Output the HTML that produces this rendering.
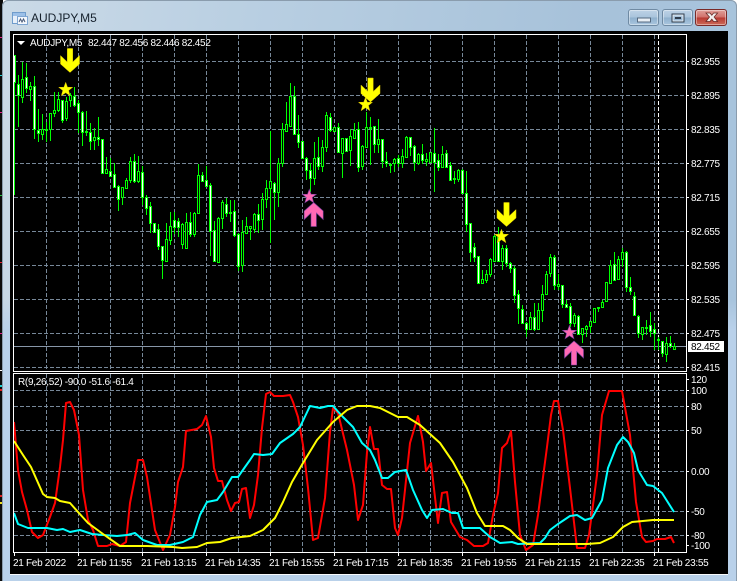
<!DOCTYPE html>
<html>
<head>
<meta charset="utf-8">
<title>AUDJPY,M5</title>
<style>
html,body{margin:0;padding:0;background:#fff;overflow:hidden}
body{width:739px;height:581px;position:relative;font-family:"Liberation Sans",sans-serif}
#strip{position:absolute;left:0;top:0;width:3px;height:581px;background:#0c0c0c}
#frame{position:absolute;left:2px;top:0;width:735px;height:581px;border-radius:6px 6px 0 0;background:linear-gradient(100deg,#cbdae7 0%,#b9cfe2 30%,#a7c2da 70%,#a9c5de 100%);box-shadow:inset 0 0 0 1px #8a9cad}
#lower{position:absolute;left:3px;top:300px;width:733px;height:281px;background:linear-gradient(180deg,rgba(185,209,234,0) 0,#b9d1ea 30px)}
#ttl{position:absolute;left:31px;top:11px;font-size:12px;line-height:15px;color:#15202c}
.btn{position:absolute;top:9px;height:17px;border:1px solid #6f8aa3;border-radius:3px;box-sizing:border-box;background:linear-gradient(180deg,#bdd2e6 0,#a9c4dc 48%,#8fb0cd 52%,#a9c6df 100%);box-shadow:inset 0 0 0 1px rgba(255,255,255,.4)}
#svg{position:absolute;left:0;top:0}
text{font-family:"Liberation Sans",sans-serif;font-size:10px;fill:#fff;letter-spacing:-.3px}
</style>
</head>
<body>
<div id="strip"></div>
<div id="frame"></div>
<div id="lower"></div>
<div id="ttl">AUDJPY,M5</div>
<div class="btn" style="left:628px;width:31px"></div>
<div class="btn" style="left:662px;width:31px"></div>
<div class="btn" style="left:695px;width:32px;border-color:#7a2a28;background:linear-gradient(180deg,#e0a09a 0,#d0706a 48%,#b83a32 52%,#cc6a58 100%)"></div>
<svg id="svg" width="739" height="581" viewBox="0 0 739 581" xmlns="http://www.w3.org/2000/svg">
<!-- left strip ticks -->
<g shape-rendering="crispEdges">
<rect x="0" y="37" width="2" height="1" fill="#e0208a"/><rect x="0" y="75" width="2" height="1" fill="#20d0d0"/><rect x="0" y="112" width="2" height="1" fill="#e0208a"/><rect x="0" y="195" width="2" height="1" fill="#20c040"/><rect x="0" y="262" width="2" height="1" fill="#e02030"/><rect x="0" y="333" width="2" height="1" fill="#e0208a"/><rect x="0" y="370" width="2" height="1" fill="#fff"/><rect x="0" y="385" width="2" height="2" fill="#20d0d0"/><rect x="0" y="389" width="2" height="2" fill="#e02020"/><rect x="0" y="495" width="2" height="2" fill="#e02020"/><rect x="0" y="502" width="2" height="2" fill="#f0e020"/>
</g>
<!-- title icon -->
<g shape-rendering="crispEdges">
<rect x="12.500" y="12.500" width="13" height="11" fill="#e8f0fa" stroke="#6f9ccc"/>
<rect x="13" y="13" width="12" height="3" fill="#9cc0e8"/>
<rect x="17.500" y="16.500" width="10" height="8" fill="#f4f8fd" stroke="#7fa6d2"/>
</g>
<path d="M19 22l1.500-3 1.500 3 1.500-3 1.500 3" fill="none" stroke="#4a5a78" stroke-width="1"/>
<!-- button glyphs -->
<rect x="637.500" y="18" width="13" height="4" fill="#e8eef4" stroke="#566a80"/>
<rect x="672" y="14" width="12" height="8" fill="none" stroke="#2e3c4c" stroke-width="1"/>
<rect x="673" y="15" width="10" height="6" fill="none" stroke="#e4ecf4" stroke-width="1"/>
<rect x="675" y="17" width="6" height="2" fill="#2e3c4c"/>
<path d="M706 13h4l1.800 2.200 1.800-2.200h4l-3.500 4 3.500 4.500h-4l-1.800-2.300-1.800 2.300h-4l3.500-4.500z" fill="#f2efee" stroke="#6b2a26" stroke-width=".8"/>
<!-- chart bg -->
<rect x="10" y="31" width="718" height="543" fill="#000"/>
<path d="M10 574.500H728" stroke="#fff" stroke-width="1" opacity=".9"/>
<!-- grid -->
<g stroke="#778899" stroke-width="1" stroke-dasharray="4 2" shape-rendering="crispEdges" fill="none">
<path d="M14 61.500H686M14 95.500H686M14 129.500H686M14 163.500H686M14 197.500H686M14 231.500H686M14 265.500H686M14 299.500H686M14 333.500H686M14 367.500H686"/>
<path d="M14 390.500H686M14 406.500H686M14 430.500H686M14 471.500H686M14 511.500H686M14 535.500H686"/>
<path d="M46.500 35V371M78.500 35V371M110.500 35V371M142.500 35V371M174.500 35V371M206.500 35V371M238.500 35V371M270.500 35V371M302.500 35V371M334.500 35V371M366.500 35V371M398.500 35V371M430.500 35V371M462.500 35V371M494.500 35V371M526.500 35V371M558.500 35V371M590.500 35V371M622.500 35V371M654.500 35V371"/>
<path d="M46.500 374V552M78.500 374V552M110.500 374V552M142.500 374V552M174.500 374V552M206.500 374V552M238.500 374V552M270.500 374V552M302.500 374V552M334.500 374V552M366.500 374V552M398.500 374V552M430.500 374V552M462.500 374V552M494.500 374V552M526.500 374V552M558.500 374V552M590.500 374V552M622.500 374V552M654.500 374V552"/>
</g>
<path d="M658.500 35V371M658.500 374V552" stroke="#fff" stroke-width="1" stroke-dasharray="4 2" shape-rendering="crispEdges"/>
<path d="M14 346.500H686" stroke="#8796a8" stroke-width="1" shape-rendering="crispEdges"/>
<!-- wicks -->
<path shape-rendering="crispEdges" stroke="#00ff00" stroke-width="1" fill="none" d="M14.500 55V195M18.500 75V127M22.500 62V103M26.500 63V93M30.500 82V101M34.500 76V139M38.500 109V142M42.500 114V140M46.500 122V142M50.500 113V141M54.500 92V117M58.500 92V112M62.500 100V123M66.500 97V121M70.500 93V107M74.500 87V107M78.500 100V133M82.500 111V146M86.500 111V136M90.500 123V150M94.500 128V150M98.500 117V146M102.500 139V173M106.500 157V173M110.500 158V176M114.500 163V187M118.500 185V211M122.500 187V205M126.500 178V188M130.500 157V183M134.500 154V183M138.500 156V183M142.500 166V205M146.500 195V215M150.500 202V233M154.500 223V232M158.500 224V250M162.500 246V279M166.500 223V261M170.500 212V245M174.500 212V234M178.500 218V237M182.500 223V249M186.500 213V248M190.500 212V237M194.500 212V237M198.500 164V213M202.500 172V182M206.500 166V186M210.500 183V256M214.500 221V262M218.500 217V262M222.500 200V229M226.500 198V217M230.500 200V222M234.500 200V237M238.500 233V271M242.500 220V272M246.500 217V233M250.500 226V240M254.500 213V233M258.500 204V233M262.500 193V230M266.500 180V208M270.500 131V243M274.500 182V220M278.500 158V207M282.500 123V167M286.500 102V131M290.500 83V126M294.500 86V135M298.500 115V148M302.500 141V158M306.500 157V180M310.500 163V192M314.500 142V185M318.500 137V170M322.500 140V172M326.500 112V152M330.500 113V132M334.500 127V132M338.500 123V153M342.500 138V178M346.500 138V152M350.500 129V166M354.500 123V138M358.500 122V172M362.500 145V170M366.500 112V147M370.500 117V165M374.500 126V153M378.500 119V153M382.500 139V168M386.500 152V167M390.500 163V173M394.500 158V172M398.500 155V167M402.500 149V168M406.500 136V158M410.500 137V156M414.500 145V171M418.500 153V165M422.500 144V164M426.500 153V166M430.500 152V163M434.500 128V192M438.500 154V171M442.500 146V167M446.500 150V168M450.500 162V181M454.500 171V184M458.500 169V182M462.500 169V193M466.500 171V232M470.500 223V262M474.500 243V262M478.500 256V283M482.500 270V283M486.500 270V283M490.500 258V277M494.500 235V262M498.500 227V261M502.500 245V270M506.500 245V267M510.500 262V273M514.500 266V303M518.500 290V324M522.500 305V324M526.500 322V337M530.500 312V330M534.500 303V331M538.500 303V329M542.500 285V322M546.500 271V295M550.500 254V277M554.500 255V290M558.500 274V290M562.500 285V308M566.500 300V308M570.500 303V327M574.500 313V327M578.500 315V335M582.500 328V343M586.500 325V337M590.500 321V333M594.500 308V323M598.500 307V312M602.500 300V308M606.500 282V301M610.500 260V284M614.500 252V281M618.500 256V280M622.500 248V267M626.500 251V292M630.500 277V295M634.500 292V316M638.500 315V338M642.500 327V340M646.500 320V335M650.500 312V337M654.500 323V350M658.500 337V350M662.500 341V357M666.500 337V362M670.500 336V348M674.500 343V350"/>
<!-- white bodies -->
<path shape-rendering="crispEdges" stroke="#00ff00" stroke-width="1" fill="#fff" d="M13.500 55.500h2v27h-2zM17.500 84.500h2v11h-2zM25.500 77.500h2v11h-2zM33.500 86.500h2v43h-2zM37.500 130.500h2v3h-2zM61.500 100.500h2v20h-2zM73.500 96.500h2v9h-2zM77.500 103.500h2v9h-2zM81.500 112.500h2v20h-2zM89.500 132.500h2v9h-2zM97.500 137.500h2v2h-2zM101.500 139.500h2v34h-2zM109.500 171.500h2v5h-2zM113.500 174.500h2v13h-2zM117.500 186.500h2v13h-2zM133.500 161.500h2v20h-2zM141.500 172.500h2v25h-2zM145.500 197.500h2v11h-2zM149.500 206.500h2v17h-2zM153.500 223.500h2v9h-2zM157.500 229.500h2v17h-2zM161.500 246.500h2v14h-2zM173.500 220.500h2v7h-2zM177.500 221.500h2v6h-2zM189.500 222.500h2v12h-2zM201.500 175.500h2v6h-2zM205.500 180.500h2v6h-2zM209.500 185.500h2v46h-2zM213.500 230.500h2v31h-2zM225.500 204.500h2v9h-2zM233.500 211.500h2v24h-2zM237.500 234.500h2v32h-2zM257.500 214.500h2v6h-2zM273.500 183.500h2v9h-2zM293.500 96.500h2v38h-2zM297.500 134.500h2v8h-2zM301.500 141.500h2v17h-2zM305.500 158.500h2v12h-2zM309.500 170.500h2v8h-2zM317.500 157.500h2v9h-2zM329.500 117.500h2v13h-2zM337.500 127.500h2v25h-2zM345.500 138.500h2v13h-2zM357.500 129.500h2v38h-2zM373.500 126.500h2v18h-2zM381.500 139.500h2v22h-2zM385.500 161.500h2v2h-2zM397.500 158.500h2v5h-2zM409.500 137.500h2v10h-2zM413.500 146.500h2v16h-2zM421.500 154.500h2v6h-2zM433.500 153.500h2v9h-2zM437.500 160.500h2v7h-2zM445.500 153.500h2v14h-2zM449.500 165.500h2v15h-2zM461.500 170.500h2v23h-2zM465.500 193.500h2v31h-2zM469.500 223.500h2v29h-2zM473.500 247.500h2v10h-2zM477.500 256.500h2v27h-2zM497.500 237.500h2v24h-2zM505.500 248.500h2v15h-2zM509.500 263.500h2v5h-2zM513.500 268.500h2v27h-2zM517.500 294.500h2v14h-2zM521.500 309.500h2v14h-2zM525.500 323.500h2v6h-2zM533.500 317.500h2v12h-2zM553.500 257.500h2v28h-2zM561.500 285.500h2v19h-2zM565.500 304.500h2v3h-2zM569.500 306.500h2v17h-2zM577.500 316.500h2v18h-2zM613.500 264.500h2v16h-2zM625.500 252.500h2v35h-2zM629.500 287.500h2v4h-2zM633.500 296.500h2v19h-2zM637.500 316.500h2v17h-2zM649.500 325.500h2v6h-2zM653.500 329.500h2v4h-2zM661.500 341.500h2v12h-2zM669.500 343.500h2v3h-2z"/>
<!-- black bodies -->
<path shape-rendering="crispEdges" stroke="#00ff00" stroke-width="1" fill="#000" d="M21.500 79.500h2v18h-2zM29.500 86.500h2v3h-2zM41.500 129.500h2v5h-2zM45.500 129.500h2v1h-2zM49.500 113.500h2v16h-2zM53.500 110.500h2v3h-2zM57.500 99.500h2v11h-2zM65.500 101.500h2v17h-2zM69.500 95.500h2v5h-2zM85.500 131.500h2v1h-2zM93.500 137.500h2v3h-2zM105.500 169.500h2v4h-2zM121.500 187.500h2v10h-2zM125.500 180.500h2v8h-2zM129.500 161.500h2v19h-2zM137.500 171.500h2v10h-2zM165.500 239.500h2v22h-2zM169.500 226.500h2v14h-2zM181.500 224.500h2v20h-2zM185.500 222.500h2v26h-2zM193.500 213.500h2v21h-2zM197.500 175.500h2v38h-2zM217.500 218.500h2v44h-2zM221.500 202.500h2v16h-2zM229.500 212.500h2v1h-2zM241.500 232.500h2v33h-2zM245.500 226.500h2v7h-2zM249.500 226.500h2v2h-2zM253.500 214.500h2v15h-2zM261.500 199.500h2v20h-2zM265.500 188.500h2v11h-2zM269.500 181.500h2v7h-2zM277.500 163.500h2v29h-2zM281.500 129.500h2v34h-2zM285.500 124.500h2v7h-2zM289.500 96.500h2v30h-2zM313.500 158.500h2v20h-2zM321.500 147.500h2v19h-2zM325.500 115.500h2v32h-2zM333.500 127.500h2v4h-2zM341.500 138.500h2v15h-2zM349.500 136.500h2v14h-2zM353.500 130.500h2v8h-2zM361.500 146.500h2v20h-2zM365.500 127.500h2v20h-2zM369.500 127.500h2v1h-2zM377.500 139.500h2v5h-2zM389.500 164.500h2v1h-2zM393.500 159.500h2v4h-2zM401.500 156.500h2v7h-2zM405.500 137.500h2v20h-2zM417.500 154.500h2v9h-2zM425.500 159.500h2v2h-2zM429.500 152.500h2v10h-2zM441.500 154.500h2v13h-2zM453.500 178.500h2v1h-2zM457.500 170.500h2v9h-2zM481.500 279.500h2v4h-2zM485.500 274.500h2v6h-2zM489.500 259.500h2v15h-2zM493.500 236.500h2v25h-2zM501.500 248.500h2v13h-2zM529.500 317.500h2v12h-2zM537.500 310.500h2v19h-2zM541.500 294.500h2v16h-2zM545.500 274.500h2v20h-2zM549.500 257.500h2v16h-2zM557.500 284.500h2v2h-2zM573.500 315.500h2v8h-2zM581.500 328.500h2v6h-2zM585.500 326.500h2v3h-2zM589.500 321.500h2v5h-2zM593.500 308.500h2v14h-2zM597.500 307.500h2v1h-2zM601.500 302.500h2v5h-2zM605.500 282.500h2v19h-2zM609.500 265.500h2v18h-2zM617.500 259.500h2v20h-2zM621.500 252.500h2v7h-2zM641.500 327.500h2v7h-2zM645.500 327.500h2v1h-2zM657.500 339.500h2v1h-2zM665.500 343.500h2v11h-2zM673.500 346.500h2v3h-2z"/>
<!-- arrows & stars -->
<defs>
<polygon id="dn" points="-2.700,0 2.700,0 2.700,13.500 9.500,7 9.500,15.500 0,24 -9.500,15.500 -9.500,7 -2.700,13.500"/>
<polygon id="up" points="0,0 9.500,8.500 9.500,17 2.700,10.500 2.700,24 -2.700,24 -2.700,10.500 -9.500,17 -9.500,8.500"/>
<polygon id="st" points="0,-7.200 1.800,-2.300 7,-2.200 2.900,1 4.400,6.200 0,3.200 -4.400,6.200 -2.900,1 -7,-2.200 -1.800,-2.300"/>
</defs>
<g fill="#ffff00" stroke="#d8c000" stroke-width=".5">
<use href="#dn" x="70" y="48.500"/><use href="#dn" x="370.500" y="78"/><use href="#dn" x="506.500" y="202.500"/>
<use href="#st" x="65.700" y="89.500"/><use href="#st" x="365.500" y="104.500"/><use href="#st" x="501.500" y="236.500"/>
</g>
<g fill="#ff69b4" stroke="#7a3fa0" stroke-width=".6">
<use href="#up" x="313.700" y="202.500"/><use href="#up" x="574" y="341"/>
<use href="#st" x="309.300" y="196.500"/><use href="#st" x="569.500" y="332.500"/>
</g>
<!-- indicator lines -->
<g fill="none" stroke-width="2" stroke-linejoin="round">
<polyline stroke="#ff0000" points="14,422 18,470 22,492 27,510 32,532 38,538 43,535 50,517 55,503 60,467 63,440 66,403 70,402 74,410 79,435 83,490 88,520 93,530 98,546 107,546 112,544 120,546 126,542 130,503 137,467 138,460 143,460 147,477 155,530 163,550 170,535 175,507 178,482 183,467 186,431 197,429 202,425 206,416 211,437 214,468 218,481 222,481 227,500 231,511 235,503 239,502 242,489 246,488 248,503 250,518 254,505 258,475 262,428 266,394 270,392 274,396 283,396 290,395 293,402 298,417 303,445 308,488 313,540 318,538 325,498 330,432 333,408 338,413 347,450 354,485 358,520 363,505 367,452 370,427 374,449 378,449 382,485 387,489 391,489 395,528 398,535 402,518 410,443 418,416 423,442 426,471 431,463 438,523 442,493 447,492 451,522 460,537 467,540 474,546 483,546 488,543 493,515 498,493 502,448 507,443 511,431 515,482 520,535 526,550 533,545 538,515 547,447 551,415 554,401 558,401 563,430 570,488 577,548 585,548 589,535 597,475 602,415 609,391 622,391 630,435 636,502 642,537 646,542 653,541 657,539 665,539 671,537 674,543"/>
<polyline stroke="#00ffff" points="14,513 18,524 28,528 47,528 57,530 63,529 70,532 80,530 92,534 103,535 117,536 127,535 135,533 143,540 157,545 170,545 183,542 193,537 200,515 207,502 217,500 223,492 232,477 238,477 245,467 250,460 254,454 263,455 272,454 280,443 293,434 300,427 310,406 320,408 328,406 333,406 343,417 353,427 362,443 370,450 375,460 382,478 388,478 395,472 406,470 413,490 422,510 427,518 432,510 443,509 452,513 458,513 463,528 480,528 490,537 500,543 512,542 518,544 540,543 545,538 550,530 558,524 570,516 577,515 585,520 592,518 602,500 608,468 617,445 623,437 628,442 634,453 638,470 647,485 653,486 662,493 674,512"/>
<polyline stroke="#ffff00" points="14,441 23,455 31,467 43,494 47,497 55,498 60,501 70,503 78,512 88,523 103,534 120,546 147,546 173,547 182,548 197,547 207,543 220,542 232,538 250,536 263,530 275,518 283,502 292,482 303,463 317,440 333,422 347,410 357,406 370,406 380,408 398,417 407,417 420,425 440,443 453,462 467,488 477,513 485,526 503,526 510,530 518,538 527,544 557,544 587,544 600,543 613,537 623,527 632,522 653,520 674,520"/>
</g>
<!-- frame lines -->
<g stroke="#fff" stroke-width="1" shape-rendering="crispEdges" fill="none">
<path d="M13.500 34.500H686.500V371.500H13.500ZM13.500 373.500H686.500V552.500H13.500Z"/>
<path d="M14.500 552V556M78.500 552V556M142.500 552V556M206.500 552V556M270.500 552V556M334.500 552V556M398.500 552V556M462.500 552V556M526.500 552V556M590.500 552V556M654.500 552V556"/>
<path d="M686 61.500h3M686 95.500h3M686 129.500h3M686 163.500h3M686 197.500h3M686 231.500h3M686 265.500h3M686 299.500h3M686 333.500h3M686 367.500h3M686 379.500h3M686 390.500h3M686 406.500h3M686 430.500h3M686 471.500h3M686 511.500h3M686 535.500h3M686 545.500h3"/>
</g>
<polygon points="17,41 25,41 21,45" fill="#fff"/>
<!-- labels -->
<text x="30" y="46">AUDJPY,M5</text>
<text x="88" y="46">82.447 82.456 82.446 82.452</text>
<text x="18" y="385">R(9,26,52) -90.0 -51.6 -61.4</text>
<g>
<text x="691" y="65">82.955</text><text x="691" y="99">82.895</text><text x="691" y="133">82.835</text><text x="691" y="167">82.775</text><text x="691" y="201">82.715</text><text x="691" y="235">82.655</text><text x="691" y="269">82.595</text><text x="691" y="303">82.535</text><text x="691" y="337">82.475</text><text x="691" y="371">82.415</text>
<text x="691" y="383">120</text><text x="691" y="394">100</text><text x="691" y="410">80</text><text x="691" y="434">50</text><text x="691" y="475">0.00</text><text x="691" y="515">-50</text><text x="691" y="539">-80</text><text x="691" y="549">-100</text>
</g>
<rect x="688" y="341" width="36" height="11" fill="#fff"/>
<text x="691" y="350" style="fill:#000">82.452</text>
<g>
<text x="13" y="566">21 Feb 2022</text><text x="77" y="566">21 Feb 11:55</text><text x="141" y="566">21 Feb 13:15</text><text x="205" y="566">21 Feb 14:35</text><text x="269" y="566">21 Feb 15:55</text><text x="333" y="566">21 Feb 17:15</text><text x="397" y="566">21 Feb 18:35</text><text x="461" y="566">21 Feb 19:55</text><text x="525" y="566">21 Feb 21:15</text><text x="589" y="566">21 Feb 22:35</text><text x="653" y="566">21 Feb 23:55</text>
</g>
</svg>
</body>
</html>
